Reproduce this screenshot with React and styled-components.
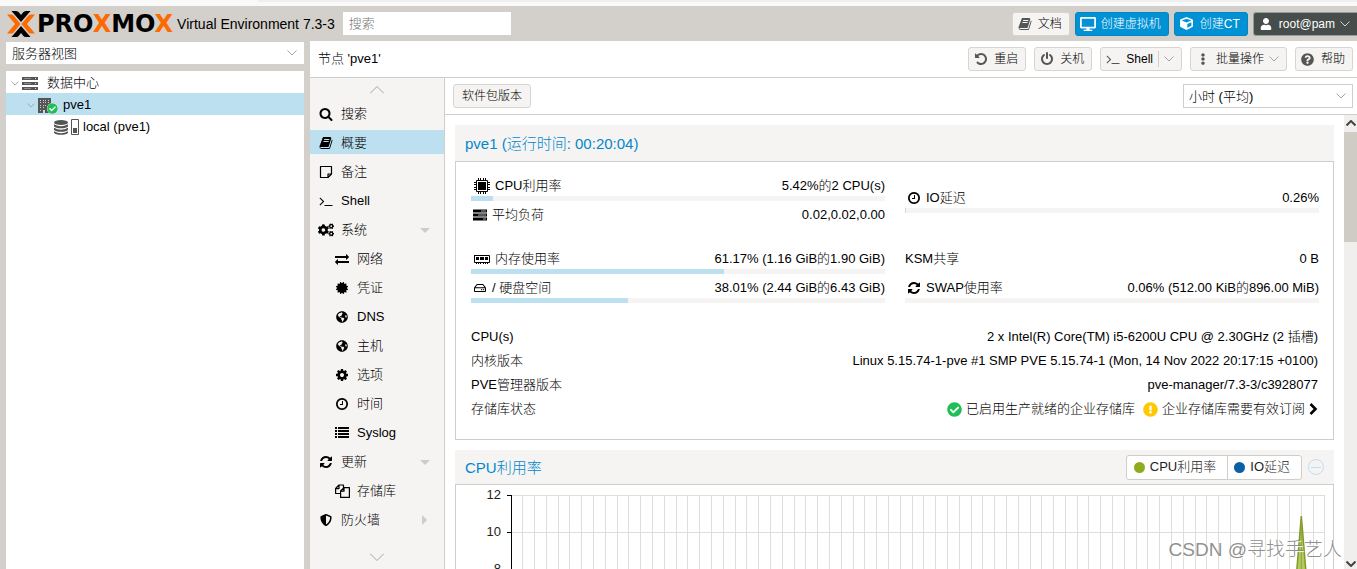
import React from 'react';
import styled, { createGlobalStyle } from 'styled-components';
import {
  FaDesktop,
  FaCube,
  FaUser,
  FaEllipsisV,
  FaQuestionCircle,
  FaCogs,
  FaCertificate,
  FaGlobeAmericas,
  FaShieldAlt,
  FaRegHdd,
  FaCheckCircle,
  FaExclamationCircle,
} from 'react-icons/fa';

const GlobalStyle = createGlobalStyle`
  :root {
    --frame: #d3cfca;
    --panel: #f5f4f2;
    --line: #d0cec9;
    --select: #bde0f1;
    --blue: #0088cf;
    --button: #0092d5;
    --font: 'Liberation Sans', Arial, 'Noto Sans CJK SC', sans-serif;
  }

  * {
    box-sizing: border-box;
  }

  body {
    margin: 0;
    background: var(--frame);
    color: #000;
    font: 300 13px/16px var(--font);
  }

  button, input, select {
    font-family: var(--font);
    font-weight: 300;
  }
`;

/* icons */

const paths = {
  book: 'M1703 478q40 57 18 129l-275 906q-19 64-76.5 107.5t-122.5 43.5h-923q-77 0-148.5-53.5t-99.5-131.5q-24-67-2-127 0-4 3-27t4-37q1-8-3-21.5t-3-19.5q2-11 8-21t16.5-23.5 16.5-23.5q23-38 45-91.5t30-91.5q3-10 .5-30t-.5-28q3-11 17-28t17-23q21-36 42-92t25-90q1-9-2.5-32t.5-28q4-13 22-30.5t22-22.5q19-26 42.5-84.5t27.5-96.5q1-8-3-25.5t-2-26.5q2-8 9-18t18-23 17-21q8-12 16.5-30.5t15-35 16-36 19.5-32 26.5-23.5 36-11.5 47.5 5.5l-1 3q38-9 51-9h761q74 0 114 56t18 130l-274 906q-36 119-71.5 153.5t-128.5 34.5h-869q-27 0-38 15-11 16-1 43 24 70 144 70h923q29 0 56-15.5t35-41.5l300-987q7-22 5-57 38 15 59 43zm-1064 2q-4 13 2 22.5t20 9.5h608q13 0 25.5-9.5t16.5-22.5l21-64q4-13-2-22.5t-20-9.5h-608q-13 0-25.5 9.5t-16.5 22.5zm-83 256q-4 13 2 22.5t20 9.5h608q13 0 25.5-9.5t16.5-22.5l21-64q4-13-2-22.5t-20-9.5h-608q-13 0-25.5 9.5t-16.5 22.5z',
  undo: 'M1664 896q0 156-61 298t-164 245-245 164-298 61q-172 0-327-72.5t-264-204.5q-7-10-6.5-22.5t8.5-20.5l137-138q10-9 25-9 16 2 23 12 73 95 179 147t225 52q104 0 198.5-40.5t163.5-109.5 109.5-163.5 40.5-198.5-40.5-198.5-109.5-163.5-163.5-109.5-198.5-40.5q-98 0-188 35.5t-160 101.5l137 138q31 30 14 69-17 40-59 40h-448q-26 0-45-19t-19-45v-448q0-42 40-59 39-17 69 14l130 129q107-101 244.5-156.5t284.5-55.5q156 0 298 61t245 164 164 245 61 298z',
  power: 'M1664 896q0 156-61 298t-164 245-245 164-298 61-298-61-245-164-164-245-61-298q0-182 80.5-343t226.5-270q43-32 95.5-25t83.5 50q32 42 24.5 94.5t-49.5 84.5q-98 74-151.5 181t-53.5 228q0 104 40.5 198.5t109.5 163.5 163.5 109.5 198.5 40.5 198.5-40.5 163.5-109.5 109.5-163.5 40.5-198.5q0-121-53.5-228t-151.5-181q-42-32-49.5-84.5t24.5-94.5q31-43 84-50t95 25q146 109 226.5 270t80.5 343zm-640-768v640q0 52-38 90t-90 38-90-38-38-90v-640q0-52 38-90t90-38 90 38 38 90z',
  terminal: 'M649 983l-466 466q-10 10-23 10t-23-10l-50-50q-10-10-10-23t10-23l393-393-393-393q-10-10-10-23t10-23l50-50q10-10 23-10t23 10l466 466q10 10 10 23t-10 23zm1079 457v64q0 14-9 23t-23 9h-960q-14 0-23-9t-9-23v-64q0-14 9-23t23-9h960q14 0 23 9t9 23z',
  search: 'M1216 832q0-185-131.5-316.5t-316.5-131.5-316.5 131.5-131.5 316.5 131.5 316.5 316.5 131.5 316.5-131.5 131.5-316.5zm512 832q0 52-38 90t-90 38q-54 0-90-38l-343-342q-179 124-399 124-143 0-273.5-55.5t-225-150-150-225-55.5-273.5 55.5-273.5 150-225 225-150 273.5-55.5 273.5 55.5 225 150 150 225 55.5 273.5q0 220-124 399l343 343q37 37 37 90z',
  refresh: 'M1639 1056q0 5-1 7-64 268-268 434.5t-478 166.5q-146 0-282.5-55t-243.5-157l-129 129q-19 19-45 19t-45-19-19-45v-448q0-26 19-45t45-19h448q26 0 45 19t19 45-19 45l-137 137q71 66 161 102t187 36q134 0 250-65t186-179q11-17 53-117 8-23 30-23h192q13 0 22.5 9.5t9.5 22.5zm25-800v448q0 26-19 45t-45 19h-448q-26 0-45-19t-19-45 19-45l138-138q-148-137-349-137-134 0-250 65t-186 179q-11 17-53 117-8 23-30 23h-199q-13 0-22.5-9.5t-9.5-22.5v-7q65-268 270-434.5t480-166.5q146 0 284 55.5t245 156.5l130-129q19-19 45-19t45 19 19 45z',
  clock: 'M1024 544v448q0 14-9 23t-23 9h-320q-14 0-23-9t-9-23v-64q0-14 9-23t23-9h224v-352q0-14 9-23t23-9h64q14 0 23 9t9 23zm416 352q0-148-73-273t-198-198-273-73-273 73-198 198-73 273 73 273 198 198 273 73 273-73 198-198 73-273zm224 0q0 209-103 385.5t-279.5 279.5-385.5 103-385.5-103-279.5-279.5-103-385.5 103-385.5 279.5-279.5 385.5-103 385.5 103 279.5 279.5 103 385.5z',
  cog: 'M1152 896q0-106-75-181t-181-75-181 75-75 181 75 181 181 75 181-75 75-181zm512-109v222q0 12-8 23t-20 13l-185 28q-19 54-39 91 35 50 107 138 10 12 10 25t-9 23q-27 37-99 108t-94 71q-12 0-26-9l-138-108q-44 23-91 38-16 136-29 186-7 28-36 28h-222q-14 0-24.5-8.5t-11.5-21.5l-28-184q-49-16-90-37l-141 107q-10 9-25 9-14 0-25-11-126-114-165-168-7-10-7-23 0-12 8-23 15-21 51-66.5t54-70.5q-27-50-41-99l-183-27q-13-2-21-12.5t-8-23.5v-222q0-12 8-23t19-13l186-28q14-46 39-92-40-57-107-138-10-12-10-24 0-10 9-23 26-36 98.5-107.5t94.5-71.5q13 0 26 10l138 107q44-23 91-38 16-136 29-186 7-28 36-28h222q14 0 24.5 8.5t11.5 21.5l28 184q49 16 90 37l142-107q9-9 24-9 13 0 25 10 129 119 165 170 7 8 7 22 0 12-8 23-15 21-51 66.5t-54 70.5q26 50 41 98l183 28q13 2 21 12.5t8 23.5z',
  exchange: 'M1792 1184v192q0 13-9.5 22.5t-22.5 9.5h-1376v192q0 13-9.5 22.5t-22.5 9.5q-12 0-24-10l-319-320q-9-9-9-22 0-14 9-23l320-320q9-9 23-9 13 0 22.5 9.5t9.5 22.5v192h1376q13 0 22.5 9.5t9.5 22.5zm0-544q0 14-9 23l-320 320q-9 9-23 9-13 0-22.5-9.5t-9.5-22.5v-192h-1376q-13 0-22.5-9.5t-9.5-22.5v-192q0-13 9.5-22.5t22.5-9.5h1376v-192q0-14 9-23t23-9q12 0 24 10l319 319q9 9 9 23z',
};

const Glyph = ({ name, size = 14 }) => (
  <svg width={size} height={size} viewBox="0 0 1792 1792" fill="currentColor" aria-hidden="true">
    <path d={paths[name]} />
  </svg>
);

const NoteIcon = () => (
  <svg width="14" height="14" viewBox="0 0 14 14" fill="none" stroke="currentColor" aria-hidden="true">
    <path d="M1.5 1.5h11v7.5l-3.500 3.500h-7.500zM9 12.500v-3.500h3.500" strokeWidth="1.200" strokeLinejoin="round" />
  </svg>
);

const ListIcon = () => (
  <svg width="14" height="14" viewBox="0 0 14 14" fill="currentColor" aria-hidden="true">
    <path d="M0 1h2v2H0zM3 1h11v2H3zM0 4h2v2H0zM3 4h11v2H3zM0 7h2v2H0zM3 7h11v2H3zM0 10h2v2H0zM3 10h11v2H3z" />
  </svg>
);

const FilesIcon = () => (
  <svg width="15" height="14" viewBox="0 0 15 14" fill="none" stroke="currentColor" strokeWidth="1.200" strokeLinejoin="round" aria-hidden="true">
    <path d="M5.600 9.500H.600V4.500L4 1h4.500v3M.600 4.600H4V1" />
    <path d="M5.600 13.400V7L9 3.600h5.400v9.800zM5.600 7.200H9V3.600" />
  </svg>
);

const TasksIcon = () => (
  <svg width="14" height="12" viewBox="0 0 14 12" aria-hidden="true">
    <path d="M0 .5h14v3H0zM0 4.500h14v3H0zM0 8.500h14v3H0z" />
    <path d="M8 1.500h5v1H8zM5 5.500h8v1H5zM10 9.500h3v1h-3z" fill="#aaa" />
  </svg>
);

const ServerIcon = () => (
  <svg width="16" height="14" viewBox="0 0 16 14" fill="#555" aria-hidden="true">
    <path d="M0 1h16v3H0zM0 6h16v3H0zM0 11h16v3H0z" />
    <path d="M2 2h7v1H2zM2 7h7v1H2zM2 12h7v1H2z" fill="#8c8c8c" />
    <path d="M13 2h1v1h-1zM13 7h1v1h-1zM13 12h1v1h-1z" fill="#ddd" />
  </svg>
);

const BuildingIcon = () => (
  <svg width="13" height="15" viewBox="0 0 13 15" fill="#555" aria-hidden="true">
    <path d="M0 0h13v15H0z" />
    <path
      d="M2 2h1v1H2zM5 2h1v1H5zM7 2h1v1H7zM10 2h1v1h-1zM2 4h1v1H2zM5 4h1v1H5zM7 4h1v1H7zM10 4h1v1h-1zM2 7h1v1H2zM5 7h1v1H5zM7 7h1v1H7zM2 9h1v1H2zM5 9h1v1H5zM2 12h1v1H2zM5 12h2v3H5z"
      fill="#c4d6de"
    />
  </svg>
);

const DatabaseIcon = () => (
  <svg width="14" height="15" viewBox="0 0 14 15" fill="#555" aria-hidden="true">
    <ellipse cx="7" cy="2.500" rx="7" ry="2.500" />
    <path d="M0 4.200q7 4 14 0v2q-1.500 2-7 2t-7-2zM0 7.700q7 4 14 0v2q-1.500 2-7 2t-7-2zM0 11.200q7 4 14 0v1.600q-1.500 2-7 2t-7-2z" />
  </svg>
);

const UsageIcon = () => (
  <svg width="8" height="16" viewBox="0 0 8 16" aria-hidden="true">
    <path d="M.5.5h7v15h-7z" fill="#fff" stroke="#555" />
    <path d="M2 9h4v5H2z" fill="#555" />
  </svg>
);

const CpuIcon = () => (
  <svg width="16" height="16" viewBox="0 0 16 16" aria-hidden="true">
    <path d="M2.500 2.500h11v11h-11z" fill="none" stroke="#000" />
    <path d="M4 4h8v8H4z" />
    <path d="M4 0h1v2H4zM6 0h1v2H6zM9 0h1v2H9zM11 0h1v2h-1zM4 14h1v2H4zM6 14h1v2H6zM9 14h1v2H9zM11 14h1v2h-1zM0 4h2v1H0zM0 6h2v1H0zM0 9h2v1H0zM0 11h2v1H0zM14 4h2v1h-2zM14 6h2v1h-2zM14 9h2v1h-2zM14 11h2v1h-2z" />
  </svg>
);

const MemoryIcon = () => (
  <svg width="16" height="9" viewBox="0 0 16 9" aria-hidden="true">
    <path d="M.5.5h15v7H.5z" fill="none" stroke="#000" />
    <path d="M2 2h3v3H2zM6 2h4v3H6zM11 2h3v3h-3zM2 8h1v1H2zM4 8h1v1H4zM6 8h1v1H6zM9 8h1v1H9zM11 8h1v1h-1zM13 8h1v1h-1zM0 0h1v1H0z" />
  </svg>
);

const Chevron = ({ up, width = 10, color = '#a9a59e', weight = 1 }) => (
  <svg width={width} height={width / 2 + 1} viewBox="0 0 10 6" fill="none" stroke={color} strokeWidth={weight} aria-hidden="true">
    <path d={up ? 'M.5 5.500L5 1l4.500 4.500' : 'M.5.5L5 5 9.500.5'} vectorEffect="non-scaling-stroke" />
  </svg>
);

const MoreIcon = () => (
  <svg width="9" height="12" viewBox="0 0 9 12" fill="none" stroke="#000" strokeWidth="2.600" aria-hidden="true">
    <path d="M1.500 1L6.500 6l-5 5" />
  </svg>
);

const LogoMark = () => (
  <svg width="28" height="26" viewBox="0 0 28 26" aria-hidden="true">
    <path d="M4.500 0H9q2 0 3 1.500l2 2.500 2-2.500Q17 0 19 0h4.500L14 11z" />
    <path d="M4.500 26H9q2 0 3-1.500l2-2.500 2 2.500q1 1.500 3 1.500h4.500L14 15z" />
    <path d="M0 3.500h4q2 0 3 1.500l6.500 8L7 21q-1 1.500-3 1.500H0L8 13z" fill="#ff6a00" />
    <path d="M28 3.500h-4q-2 0-3 1.500l-6.500 8 6.500 8q1 1.500 3 1.500h4L20 13z" fill="#ff6a00" />
  </svg>
);

/* frame */

const StyledApp = styled.div`
  display: flex;
  flex-direction: column;
  height: 100vh;
  overflow: hidden;
`;

const StyledStrip = styled.div`
  flex: none;
  height: 6px;
  background: linear-gradient(#efefef, #efefef) 258px 0 / 100% 2px no-repeat #f9f9f9;
`;

const StyledHeader = styled.header`
  display: flex;
  flex: none;
  align-items: center;
  height: 35px;
  padding-left: 7px;

  .version {
    margin: 0 8px 0 4px;
    font-size: 14px;
    white-space: nowrap;
  }

  input {
    width: 168px;
    height: 23px;
    padding: 0 6px;
    border: 0;
    background: #fff;
    font-size: 13px;

    &::placeholder {
      color: #777;
    }
  }
`;

const StyledLogo = styled.div`
  display: flex;
  align-items: center;
  gap: 2px;
  font: bold 24px/26px 'DejaVu Sans', sans-serif;

  span {
    color: #ff6a00;
  }
`;

const StyledActions = styled.div`
  display: flex;
  gap: ${({ $gap }) => $gap}px;
  margin-left: auto;
`;

const tones = {
  plain: 'background: var(--panel); border-color: #d8d5d0; color: #000;',
  blue: 'background: var(--button); border-color: #0b83bd; color: #fff;',
  dark: 'background: #464d4a; border-color: #8fa09b; color: #fff; border-right: 0; border-radius: 3px 0 0 3px;',
};

const StyledButton = styled.button`
  display: flex;
  align-items: center;
  gap: 5px;
  height: 24px;
  padding: 0 7px 0 4px;
  border: 1px solid;
  border-radius: 3px;
  font-size: 12px;
  line-height: 16px;
  white-space: nowrap;
  ${({ $tone = 'plain' }) => tones[$tone]}

  .icon {
    display: flex;
    justify-content: center;
    width: 16px;
    color: ${({ $tone = 'plain' }) => ($tone === 'plain' ? '#555' : '#fff')};
  }

  .split {
    display: flex;
    align-items: center;
    height: 16px;
    padding-left: 5px;
    border-left: 1px solid var(--line);
  }
`;

const StyledColumns = styled.div`
  display: flex;
  flex: 1;
  min-height: 0;
  gap: 6px;
  padding-left: 6px;
`;

const StyledSelect = styled.div`
  display: grid;
  align-items: center;
  height: ${({ $height }) => $height}px;
  border: 1px solid ${({ $framed }) => ($framed ? 'var(--line)' : '#fff')};
  background: #fff;

  select {
    grid-area: 1 / 1;
    height: 100%;
    padding: 0 24px 0 5px;
    border: 0;
    background: transparent;
    color: #000;
    font-size: 13px;
    appearance: none;
  }

  svg {
    grid-area: 1 / 1;
    justify-self: end;
    margin-right: 6px;
    pointer-events: none;
  }
`;

/* resource tree */

const StyledSidebar = styled.aside`
  display: flex;
  flex: 0 0 298px;
  flex-direction: column;
  gap: 7px;
  padding-top: 1px;
`;

const StyledTree = styled.ul`
  flex: 1;
  margin: 0;
  padding: 0;
  background: #fff;
  list-style: none;
`;

const StyledNode = styled.li`
  display: flex;
  align-items: center;
  height: 22px;
  padding-top: 2px;
  padding-left: ${({ $level }) => $level * 16 + 5}px;
  background: ${({ $active }) => ($active ? 'var(--select)' : 'none')};

  .toggle {
    display: flex;
    width: 11px;
  }

  .icons {
    display: flex;
    align-items: center;
    gap: 3px;
    min-width: 25px;
    padding-right: 4px;
  }
`;

const StyledHostIcon = styled.span`
  position: relative;
  display: flex;

  .ok {
    position: absolute;
    left: 9px;
    top: 5px;
    border-radius: 50%;
    background: #fff;
    color: #1fbf55;
  }
`;

/* node menu */

const StyledMain = styled.main`
  display: flex;
  flex: 1;
  flex-direction: column;
  min-width: 0;
  background: #fff;
`;

const StyledTitleBar = styled.div`
  display: flex;
  flex: none;
  align-items: center;
  height: 37px;
  padding: 0 4px 0 8px;
  border-bottom: 1px solid var(--line);

  h1 {
    margin: 0;
    font-size: 13px;
    font-weight: 300;
  }
`;

const StyledMenu = styled.nav`
  display: flex;
  flex: 0 0 135px;
  flex-direction: column;
  justify-content: space-between;
  border-right: 1px solid var(--line);
  background: var(--panel);

  ul {
    flex: 1;
    margin: 0;
    padding: 0;
    list-style: none;
  }

  li {
    margin-bottom: 5px;
  }

  .scroller {
    display: flex;
    align-items: center;
    justify-content: center;
    height: 23px;
  }
`;

const StyledMenuItem = styled.a`
  display: flex;
  align-items: center;
  height: 24px;
  padding: 2px 14px 0 ${({ $sub }) => ($sub ? 24 : 8)}px;
  background: ${({ $active }) => ($active ? 'var(--select)' : 'none')};
  color: #000;
  text-decoration: none;

  .icon {
    display: flex;
    justify-content: center;
    width: 16px;
    margin-right: 7px;
  }

  .arrow {
    display: flex;
    justify-content: center;
    width: 10px;
    margin-left: auto;
  }
`;

/* content */

const StyledContent = styled.section`
  display: flex;
  flex: 1;
  flex-direction: column;
  min-width: 0;
`;

const StyledToolbar = styled.div`
  display: flex;
  flex: none;
  align-items: center;
  justify-content: space-between;
  height: 37px;
  padding: 0 4px 0 8px;
  border-bottom: 1px solid var(--line);

  ${StyledButton} {
    padding: 0 8px;
  }

  ${StyledSelect} {
    width: 170px;
  }
`;

const StyledScroll = styled.div`
  display: flex;
  flex: 1;
  min-height: 0;
`;

const StyledCards = styled.div`
  flex: 1;
  min-width: 0;
  padding: 10px 10px 0;
  overflow: hidden;
`;

const StyledScrollbar = styled.div`
  display: flex;
  flex: 0 0 13px;
  flex-direction: column;
  justify-content: space-between;
  align-items: center;
  padding: 5px 0 2px;
  background: #f0efee;

  .thumb {
    width: 100%;
    height: 110px;
    margin: 6px 0 auto;
    background: #cfccc6;
  }
`;

const StyledCard = styled.article`
  margin-bottom: 10px;

  header {
    display: flex;
    align-items: center;
    height: ${({ $head }) => $head}px;
    padding: 0 10px;
    background: var(--panel);
  }

  h2 {
    margin: 0 auto 0 0;
    padding-top: 2px;
    color: var(--blue);
    font-size: 15px;
    font-weight: 300;
    line-height: 20px;
  }

  .body {
    border: 1px solid var(--line);
  }
`;

const StyledStats = styled.div`
  display: grid;
  grid-template-columns: 1fr 1fr;
  gap: 15px 20px;
  padding: 16px 14px 0 15px;

  .centered {
    padding-top: 12px;
  }
`;

const StyledStat = styled.div`
  height: 29px;

  .text {
    display: flex;
    align-items: center;
    height: 16px;
    margin-bottom: 2px;
  }

  .icon {
    display: flex;
    justify-content: center;
    width: 17px;
    margin-right: 4px;
  }

  .wide {
    width: 21px;
    margin-right: 3px;
  }

  .value {
    margin-left: auto;
  }

  .bar {
    height: 5px;
    background: var(--panel);
  }

  .fill {
    height: 5px;
    background: var(--select);
  }
`;

const StyledInfo = styled.dl`
  margin: 0;
  padding: 16px 15px 18px;
  line-height: 24px;

  div {
    display: flex;
    justify-content: space-between;
  }

  dd {
    display: flex;
    align-items: center;
    gap: 4px;
    margin: 0;
  }

  .warn {
    margin-left: 4px;
  }
`;

const StyledLegend = styled.div`
  display: flex;
  height: 25px;
  margin-right: 6px;
  border: 1px solid var(--line);
  border-radius: 3px;
  background: #fff;
  color: #222;

  span {
    display: flex;
    align-items: center;
    gap: 5px;
    padding: 0 11px 0 7px;
  }

  span + span {
    padding-left: 6px;
    border-left: 1px solid var(--line);
  }

  i {
    width: 11px;
    height: 11px;
    border-radius: 50%;
  }
`;

const StyledCollapse = styled.button`
  display: flex;
  align-items: center;
  justify-content: center;
  width: 16px;
  height: 16px;
  padding: 0;
  border: 1px solid var(--select);
  border-radius: 50%;
  background: none;

  &::before {
    content: '';
    width: 10px;
    height: 1px;
    background: var(--select);
  }
`;

const StyledChart = styled.div`
  display: flex;
  height: 230px;
  padding: 9px 8px 0 0;

  .labels {
    width: 45px;
    margin-top: -7px;
    text-align: right;
    color: #222;
  }

  .labels div {
    height: 37px;
  }

  > svg {
    flex: 1;
    min-width: 0;
    margin-left: 6px;
  }
`;

const StyledWatermark = styled.div`
  position: absolute;
  right: 15px;
  bottom: 7px;
  color: rgba(130, 130, 130, 0.9);
  font-size: 19px;
  line-height: 24px;
  text-shadow: 1px 1px 1px #fff;
  pointer-events: none;
`;

const menu = [
  { label: '搜索', icon: <Glyph name="search" /> },
  { label: '概要', icon: <Glyph name="book" />, active: true },
  { label: '备注', icon: <NoteIcon /> },
  { label: 'Shell', icon: <Glyph name="terminal" /> },
  { label: '系统', icon: <FaCogs size={16} />, arrow: 'M0 0h10L5 5z' },
  { label: '网络', icon: <Glyph name="exchange" />, sub: true },
  { label: '凭证', icon: <FaCertificate size={12} />, sub: true },
  { label: 'DNS', icon: <FaGlobeAmericas size={12} />, sub: true },
  { label: '主机', icon: <FaGlobeAmericas size={12} />, sub: true },
  { label: '选项', icon: <Glyph name="cog" />, sub: true },
  { label: '时间', icon: <Glyph name="clock" />, sub: true },
  { label: 'Syslog', icon: <ListIcon />, sub: true },
  { label: '更新', icon: <Glyph name="refresh" />, arrow: 'M0 0h10L5 5z' },
  { label: '存储库', icon: <FilesIcon />, sub: true },
  { label: '防火墙', icon: <FaShieldAlt size={12} />, arrow: 'M2 0l5 5-5 5z' },
];

const Stat = ({ icon, wide, label, value, usage }) => (
  <StyledStat>
    <div className="text">
      {icon && <span className={wide ? 'icon wide' : 'icon'}>{icon}</span>}
      <span>{label}</span>
      <span className="value">{value}</span>
    </div>
    {usage !== undefined && (
      <div className="bar">
        <div className="fill" style={{ width: `${usage}%` }} />
      </div>
    )}
  </StyledStat>
);

const columns = Array.from({ length: 70 }, (_, i) => `${(i / 69) * 100}%`);
const ticks = [12, 10, 8];

const Chart = () => (
  <StyledChart>
    <div className="labels">
      {ticks.map(tick => (
        <div key={tick}>{tick}</div>
      ))}
    </div>
    <svg height="221" overflow="visible" shapeRendering="crispEdges">
      <svg x="4" width="99.500%" height="221" overflow="visible">
        {columns.map(x => (
          <line key={x} x1={x} x2={x} y1="1" y2="221" stroke="#dededa" />
        ))}
        {ticks.map((tick, i) => (
          <line key={tick} x1="0" x2="100%" y1={i * 37 + 1} y2={i * 37 + 1} stroke="#dededa" />
        ))}
        <svg x="97.100%" y="22" overflow="visible" shapeRendering="auto">
          <path d="M0 0L-5 60H5z" fill="#b5c95c" stroke="#819a2b" strokeWidth="1.500" />
          <path d="M0 4V56" stroke="#8ca63a" />
        </svg>
      </svg>
      <path d="M4.500 1v220M0 1.500h4M0 38.500h4M0 75.500h4" stroke="#000" />
    </svg>
  </StyledChart>
);

const Header = () => (
  <StyledHeader>
    <StyledLogo>
      <LogoMark />
      <div>
        PRO<span>X</span>MO<span>X</span>
      </div>
    </StyledLogo>
    <span className="version">Virtual Environment 7.3-3</span>
    <input type="text" placeholder="搜索" aria-label="搜索" />
    <StyledActions $gap={5}>
      <StyledButton>
        <span className="icon"><Glyph name="book" /></span>文档
      </StyledButton>
      <StyledButton $tone="blue">
        <span className="icon"><FaDesktop size={16} /></span>创建虚拟机
      </StyledButton>
      <StyledButton $tone="blue">
        <span className="icon"><FaCube size={13} /></span>创建CT
      </StyledButton>
      <StyledButton $tone="dark">
        <span className="icon"><FaUser size={12} /></span>root@pam
        <Chevron color="#cfd4d2" />
      </StyledButton>
    </StyledActions>
  </StyledHeader>
);

const Sidebar = () => (
  <StyledSidebar>
    <StyledSelect $height={22}>
      <select aria-label="视图">
        <option>服务器视图</option>
      </select>
      <Chevron />
    </StyledSelect>
    <StyledTree>
      <StyledNode $level={0}>
        <span className="toggle"><Chevron width={8} /></span>
        <span className="icons"><ServerIcon /></span>
        数据中心
      </StyledNode>
      <StyledNode $level={1} $active>
        <span className="toggle"><Chevron width={8} /></span>
        <span className="icons">
          <StyledHostIcon>
            <BuildingIcon />
            <FaCheckCircle className="ok" size={11} />
          </StyledHostIcon>
        </span>
        pve1
      </StyledNode>
      <StyledNode $level={2}>
        <span className="toggle" />
        <span className="icons">
          <DatabaseIcon />
          <UsageIcon />
        </span>
        local (pve1)
      </StyledNode>
    </StyledTree>
  </StyledSidebar>
);

const Menu = () => (
  <StyledMenu>
    <div className="scroller"><Chevron up width={16} /></div>
    <ul>
      {menu.map(({ label, icon, active, sub, arrow }) => (
        <li key={label}>
          <StyledMenuItem href="#" $active={active} $sub={sub}>
            <span className="icon">{icon}</span>
            {label}
            {arrow && (
              <span className="arrow">
                <svg width="10" height={arrow.startsWith('M2') ? 10 : 5} fill="#cfccc6">
                  <path d={arrow} />
                </svg>
              </span>
            )}
          </StyledMenuItem>
        </li>
      ))}
    </ul>
    <div className="scroller"><Chevron width={16} /></div>
  </StyledMenu>
);

const Summary = () => (
  <StyledCard $head={36}>
    <header>
      <h2>pve1 (运行时间: 00:20:04)</h2>
    </header>
    <div className="body">
      <StyledStats>
        <div>
          <Stat icon={<CpuIcon />} wide label="CPU利用率" value="5.42%的2 CPU(s)" usage={5.42} />
          <Stat icon={<TasksIcon />} label="平均负荷" value="0.02,0.02,0.00" />
        </div>
        <div className="centered">
          <Stat icon={<Glyph name="clock" />} label="IO延迟" value="0.26%" usage={0.26} />
        </div>
        <div>
          <Stat icon={<MemoryIcon />} wide label="内存使用率" value="61.17% (1.16 GiB的1.90 GiB)" usage={61.17} />
          <Stat icon={<FaRegHdd size={12} />} label="/ 硬盘空间" value="38.01% (2.44 GiB的6.43 GiB)" usage={38.01} />
        </div>
        <div>
          <Stat label="KSM共享" value="0 B" />
          <Stat icon={<Glyph name="refresh" />} label="SWAP使用率" value="0.06% (512.00 KiB的896.00 MiB)" usage={0} />
        </div>
      </StyledStats>
      <StyledInfo>
        <div>
          <dt>CPU(s)</dt>
          <dd>2 x Intel(R) Core(TM) i5-6200U CPU @ 2.30GHz (2 插槽)</dd>
        </div>
        <div>
          <dt>内核版本</dt>
          <dd>Linux 5.15.74-1-pve #1 SMP PVE 5.15.74-1 (Mon, 14 Nov 2022 20:17:15 +0100)</dd>
        </div>
        <div>
          <dt>PVE管理器版本</dt>
          <dd>pve-manager/7.3-3/c3928077</dd>
        </div>
        <div>
          <dt>存储库状态</dt>
          <dd>
            <FaCheckCircle size={15} color="#1fbf55" />
            已启用生产就绪的企业存储库
            <FaExclamationCircle className="warn" size={15} color="#ffc800" />
            企业存储库需要有效订阅
            <MoreIcon />
          </dd>
        </div>
      </StyledInfo>
    </div>
  </StyledCard>
);

const App = () => (
  <>
    <GlobalStyle />
    <StyledApp>
      <StyledStrip />
      <Header />
      <StyledColumns>
        <Sidebar />
        <StyledMain>
          <StyledTitleBar>
            <h1>节点 'pve1'</h1>
            <StyledActions $gap={8}>
              <StyledButton>
                <span className="icon"><Glyph name="undo" /></span>重启
              </StyledButton>
              <StyledButton>
                <span className="icon"><Glyph name="power" /></span>关机
              </StyledButton>
              <StyledButton>
                <span className="icon"><Glyph name="terminal" /></span>Shell
                <span className="split"><Chevron /></span>
              </StyledButton>
              <StyledButton>
                <span className="icon"><FaEllipsisV size={12} /></span>批量操作
                <Chevron />
              </StyledButton>
              <StyledButton>
                <span className="icon"><FaQuestionCircle size={13} /></span>帮助
              </StyledButton>
            </StyledActions>
          </StyledTitleBar>
          <StyledScroll>
            <Menu />
            <StyledContent>
              <StyledToolbar>
                <StyledButton>软件包版本</StyledButton>
                <StyledSelect $height={24} $framed>
                  <select aria-label="时间范围">
                    <option>小时 (平均)</option>
                  </select>
                  <Chevron />
                </StyledSelect>
              </StyledToolbar>
              <StyledScroll>
                <StyledCards>
                  <Summary />
                  <StyledCard $head={34}>
                    <header>
                      <h2>CPU利用率</h2>
                      <StyledLegend>
                        <span><i style={{ background: '#8fac1f' }} />CPU利用率</span>
                        <span><i style={{ background: '#0a60a4' }} />IO延迟</span>
                      </StyledLegend>
                      <StyledCollapse aria-label="折叠" />
                    </header>
                    <div className="body">
                      <Chart />
                    </div>
                  </StyledCard>
                </StyledCards>
                <StyledScrollbar>
                  <Chevron up color="#444" weight={2} />
                  <div className="thumb" />
                  <Chevron color="#444" weight={2} />
                </StyledScrollbar>
              </StyledScroll>
            </StyledContent>
          </StyledScroll>
        </StyledMain>
      </StyledColumns>
      <StyledWatermark>CSDN @寻找手艺人</StyledWatermark>
    </StyledApp>
  </>
);

export default App;
